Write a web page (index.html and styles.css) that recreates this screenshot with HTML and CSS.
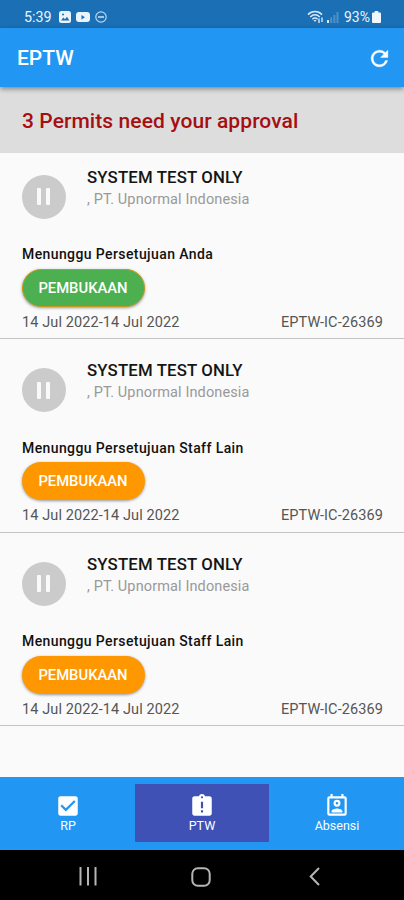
FILE: index.html
```html
<!doctype html>
<html lang="id">
<head>
    <meta charset="UTF-8">
    <meta name="viewport" content="width=device-width, initial-scale=1.0">
    <title>EPTW</title>
    <link rel="stylesheet" href="styles.css">
</head>
<body>
<div class="statusbar">
    <span class="time">5:39</span>
    <svg class="st-image" width="12" height="12" viewBox="0 0 12 12">
        <rect width="12" height="12" rx="2.5" fill="#e9f4fc"/>
        <path d="M2 9.5l2.4-3 1.6 1.8 2-2.6 2.4 3.8z" fill="#1a6fb5"/>
        <circle cx="4" cy="3.6" r="1" fill="#1a6fb5"/>
    </svg>
    <svg class="st-video" width="14" height="10" viewBox="0 0 14 10">
        <rect width="14" height="10" rx="3" fill="#e9f4fc"/>
        <path d="M5.5 3v4.4l3.4-2.2z" fill="#1a6fb5"/>
    </svg>
    <svg class="st-dnd" width="12" height="12" viewBox="0 0 12 12">
        <circle cx="6" cy="6" r="5.2" fill="none" stroke="#b9d8ef" stroke-width="1.2"/>
        <path d="M3 6h6" stroke="#cfe5f6" stroke-width="1.5"/>
    </svg>
    <div class="status-right">
        <svg width="17" height="14" viewBox="0 0 17 14" fill="none" stroke="#d8eaf8" stroke-width="1.5">
            <path d="M1 4.6C5 .6 11 .6 15 4.6"/>
            <path d="M3.2 7c3-2.8 6.6-2.8 9.6 0"/>
            <path d="M5.4 9.2c1.6-1.4 3.6-1.4 5.2 0"/>
            <path d="M6.5 10h3L8 12z" fill="#d8eaf8" stroke="none"/>
            <path d="M12 8.5v4.5M15 7.5v4.500" stroke-width="1.4"/>
        </svg>
        <svg class="st-signal" width="12" height="12" viewBox="0 0 12 12">
            <path d="M0 9h2v3H0z" fill="#d8eaf8"/>
            <path d="M3.2 6.5h2V12h-2zM6.4 4h2v8h-2zM9.5 1h2v11h-2z" fill="#4d92cb"/>
        </svg>
        <span class="percent">93%</span>
        <svg width="9" height="12" viewBox="0 0 9 12">
            <path d="M2.7 0h3.6v1.5H8Q9 1.5 9 2.5V11Q9 12 8 12H1Q0 12 0 11V2.5Q0 1.5 1 1.5h1.7z" fill="#f1f8fd"/>
        </svg>
    </div>
</div>

<div class="appbar">
    <h1>EPTW</h1>
    <svg width="25" height="25" viewBox="0 0 24 24" fill="#fff" stroke="#fff" stroke-width=".4">
        <path d="M17.65 6.35A7.958 7.958 0 0 0 12 4c-4.42 0-7.99 3.58-7.99 8s3.57 8 7.99 8c3.73 0 6.84-2.55 7.73-6h-2.08A5.99 5.99 0 0 1 12 18c-3.31 0-6-2.69-6-6s2.69-6 6-6c1.66 0 3.14.69 4.22 1.78L13 11h7V4l-2.35 2.35z"/>
    </svg>
</div>

<div class="banner">3 Permits need your approval</div>

<div class="list">
    <div class="permit">
        <div class="head">
            <div class="avatar"><i></i><i></i></div>
            <div>
                <h2>SYSTEM TEST ONLY</h2>
                <p class="company">, PT. Upnormal Indonesia</p>
            </div>
        </div>
        <p class="state">Menunggu Persetujuan Anda</p>
        <button class="btn btn-green">PEMBUKAAN</button>
        <div class="foot"><span>14 Jul 2022-14 Jul 2022</span><span>EPTW-IC-26369</span></div>
    </div>
    <div class="permit">
        <div class="head">
            <div class="avatar"><i></i><i></i></div>
            <div>
                <h2>SYSTEM TEST ONLY</h2>
                <p class="company">, PT. Upnormal Indonesia</p>
            </div>
        </div>
        <p class="state">Menunggu Persetujuan Staff Lain</p>
        <button class="btn">PEMBUKAAN</button>
        <div class="foot"><span>14 Jul 2022-14 Jul 2022</span><span>EPTW-IC-26369</span></div>
    </div>
    <div class="permit">
        <div class="head">
            <div class="avatar"><i></i><i></i></div>
            <div>
                <h2>SYSTEM TEST ONLY</h2>
                <p class="company">, PT. Upnormal Indonesia</p>
            </div>
        </div>
        <p class="state">Menunggu Persetujuan Staff Lain</p>
        <button class="btn">PEMBUKAAN</button>
        <div class="foot"><span>14 Jul 2022-14 Jul 2022</span><span>EPTW-IC-26369</span></div>
    </div>
</div>

<div class="tabs">
    <div class="tab">
        <svg width="26" height="26" viewBox="0 0 24 24" fill="#fff">
            <path d="M19 3H5c-1.11 0-2 .9-2 2v14c0 1.1.89 2 2 2h14c1.11 0 2-.9 2-2V5c0-1.1-.89-2-2-2zm-9 14l-5-5 1.41-1.41L10 14.17l7.59-7.59L19 8l-9 9z"/>
        </svg>
        <span>RP</span>
    </div>
    <div class="tab active">
        <svg width="26" height="26" viewBox="0 0 24 24" fill="#fff">
            <path d="M19 3h-4.18C14.4 1.84 13.3 1 12 1c-1.3 0-2.4.84-2.82 2H5c-1.1 0-2 .9-2 2v14c0 1.1.9 2 2 2h14c1.1 0 2-.9 2-2V5c0-1.1-.9-2-2-2zm-6 15h-2v-2h2v2zm0-4h-2V8h2v6zm-1-9c-.55 0-1-.45-1-1s.45-1 1-1 1 .45 1 1-.45 1-1 1z"/>
        </svg>
        <span>PTW</span>
    </div>
    <div class="tab">
        <svg width="26" height="26" viewBox="0 0 24 24" fill="none" stroke="#fff" stroke-width="2">
            <rect x="4" y="4" width="16" height="16" rx="1"/>
            <path d="M7 1v3M17 1v3"/>
            <circle cx="12" cy="9.5" r="2.2"/>
            <path d="M7 18v-1.2c0-1.7 3.3-2.6 5-2.6s5 .9 5 2.6V18z" fill="#fff" stroke="none"/>
        </svg>
        <span>Absensi</span>
    </div>
</div>

<div class="navbar">
    <svg width="18" height="19" viewBox="0 0 18 19" stroke="#b5b5b5" stroke-width="2"><path d="M1.5 0v18.5M9 0v18.5M16.5 0v18.5"/></svg>
    <svg class="nav-home" width="20" height="20" viewBox="0 0 20 20"><rect x="1.3" y="1.3" width="17.4" height="17.4" rx="5.5" fill="none" stroke="#b5b5b5" stroke-width="2"/></svg>
    <svg width="11" height="19" viewBox="0 0 11 19"><path d="M10 1L1.7 9.5 10 18" fill="none" stroke="#b5b5b5" stroke-width="2"/></svg>
</div>
</body>
</html>
```
FILE: styles.css
```css
*{
    padding: 0;
    margin: 0;
    box-sizing: border-box;
}
body{
    display: flex;
    flex-direction: column;
    height: 900px;
    font-family: Roboto, "Liberation Sans", sans-serif;
    background-color: #fafafa;
    overflow: hidden;
}
svg{
    display: block;
    flex: none;
}
.statusbar{
    display: flex;
    align-items: center;
    height: 28px;
    padding: 5px 23px 0 24px;
    color: #e9f4fc;
    background-color: #1a6fb5;
}
.time{
    width: 35px;
    font-size: 14.3px;
}
.st-video{
    margin-left: 5px;
}
.st-dnd{
    margin-left: 5px;
}
.status-right{
    display: flex;
    align-items: center;
    margin-left: auto;
}
.st-signal{
    margin-left: 3px;
}
.percent{
    margin: 0 2px 0 5px;
    font-size: 14px;
}
.appbar{
    display: flex;
    align-items: center;
    justify-content: space-between;
    height: 59px;
    padding: 1px 12px 0 17px;
    color: #fff;
    background-color: #2196f3;
    box-shadow: 0 2px 5px rgba(0,0,0,.4);
    z-index: 1;
}
h1{
    font-size: 21px;
    font-weight: 500;
}
.banner{
    height: 66px;
    padding-left: 22px;
    line-height: 69px;
    font-size: 21px;
    font-weight: 500;
    letter-spacing: .08px;
    color: #a50f12;
    background-color: #ddd;
}
.list{
    flex: 1;
}
.permit{
    height: 193.5px;
    padding: 15px 21px 0 22px;
    border-bottom: 1px solid #c4c4c4;
}
.permit:first-child{
    height: 186px;
    padding-top: 7.5px;
}
.head{
    display: flex;
    height: 85.5px;
}
.avatar{
    display: flex;
    align-items: center;
    justify-content: center;
    gap: 5px;
    width: 44px;
    height: 44px;
    margin: 14px 21px 0 0;
    padding-right: 1px;
    border-radius: 50%;
    background-color: #cbcbcb;
}
.avatar i{
    width: 4px;
    height: 17px;
    border-radius: 1px;
    background-color: #fafafa;
}
h2{
    margin: 5px 0 1px;
    line-height: 22px;
    font-size: 16.8px;
    font-weight: 500;
    letter-spacing: .15px;
    color: #151515;
}
.company{
    line-height: 22px;
    font-size: 14.5px;
    color: #999;
    letter-spacing: .12px;
}
.state{
    height: 22.5px;
    line-height: 17px;
    font-size: 14px;
    font-weight: 500;
    letter-spacing: .4px;
    color: #111;
}
.btn{
    display: block;
    width: 123px;
    height: 38px;
    border: 0;
    border-radius: 19px;
    padding-right: 1px;
    font-family: inherit;
    font-size: 14.8px;
    font-weight: 500;
    color: #fff;
    background-color: #ff9800;
    box-shadow: 0 1px 3px rgba(0,0,0,.4);
}
.btn-green{
    border: 1px solid #c49a1c;
    background-color: #4caf50;
}
.foot{
    display: flex;
    justify-content: space-between;
    margin-top: 6px;
    line-height: 20px;
    font-size: 14.5px;
    letter-spacing: .1px;
    color: #555;
}
.tabs{
    display: flex;
    height: 73px;
    padding: 7px 0 8px;
    background-color: #2196f3;
}
.tab{
    flex: 1;
    display: flex;
    flex-direction: column;
    align-items: center;
    padding: 9px 0 0 1px;
    font-size: 12.5px;
    line-height: 13px;
    color: #fff;
}
.active{
    padding-left: 0;
    background-color: #3f51b5;
}
.navbar{
    display: flex;
    align-items: center;
    height: 50px;
    padding: 3px 84px 0 79px;
    justify-content: space-between;
    background-color: #000;
}
.nav-home{
    margin-right: 4px;
}
```
